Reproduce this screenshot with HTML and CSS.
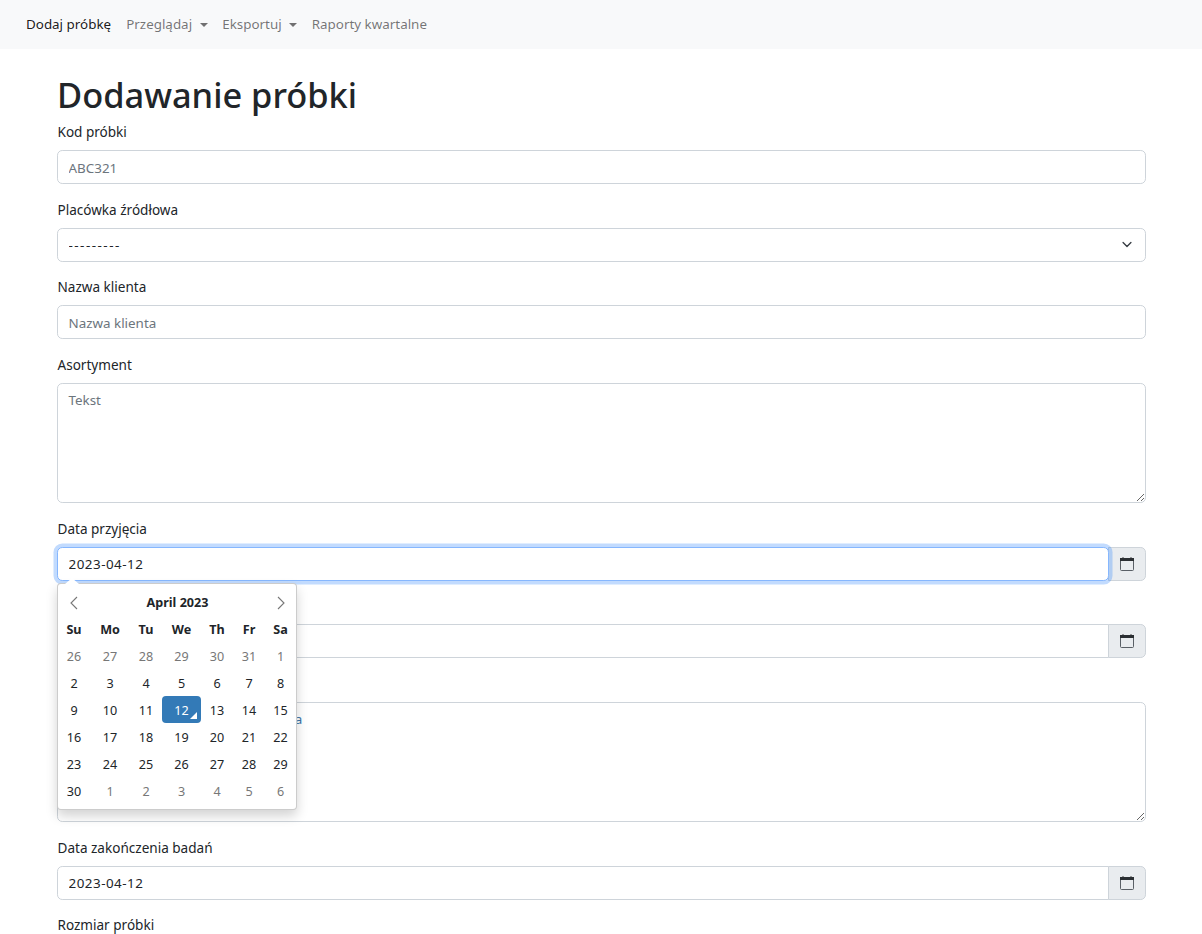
FILE: index.html
```html
<!DOCTYPE html>
<html lang="pl">
<head>
    <meta charset="UTF-8">
    <title>Dodawanie próbki</title>
    <link rel="stylesheet" href="styles.css">
</head>
<body>

    <nav class="navbar">
        <a class="nav-link active" href="#">Dodaj próbkę</a>
        <a class="nav-link dropdown" href="#">Przeglądaj</a>
        <a class="nav-link dropdown" href="#">Eksportuj</a>
        <a class="nav-link" href="#">Raporty kwartalne</a>
    </nav>

    <main class="container">
        <h1>Dodawanie próbki</h1>
        <form>
            <div class="field">
                <label>Kod próbki</label>
                <input class="form-control" type="text" placeholder="ABC321">
            </div>
            <div class="field">
                <label>Placówka źródłowa</label>
                <select class="form-control form-select">
                    <option>---------</option>
                </select>
            </div>
            <div class="field">
                <label>Nazwa klienta</label>
                <input class="form-control" type="text" placeholder="Nazwa klienta">
            </div>
            <div class="field">
                <label>Asortyment</label>
                <textarea class="form-control" placeholder="Tekst"></textarea>
            </div>
            <div class="field">
                <label>Data przyjęcia</label>
                <div class="input-group">
                    <input class="form-control date focused" type="text" value="2023-04-12">
                    <span class="input-addon">
                        <svg width="16" height="16" viewBox="0 0 16 16"><path d="M4 1v2M12 1v2" stroke="#444" fill="none"/><rect x="1.5" y="2.5" width="13" height="12" rx="1" fill="none" stroke="#495057" stroke-width=".9"/><rect x="1" y="2" width="14" height="3" fill="#2b2f33"/></svg>
                    </span>

                    <!-- kalendarz otwarty pod polem -->
                    <div class="picker">
                        <div class="picker-grid">
                            <span class="picker-nav">
                                <svg width="10" height="14" viewBox="0 0 10 14"><path d="M8 1 2 7l6 6" fill="none" stroke="#777" stroke-width="1.1"/></svg>
                            </span>
                            <strong class="picker-title">April 2023</strong>
                            <span class="picker-nav">
                                <svg width="10" height="14" viewBox="0 0 10 14"><path d="m2 1 6 6-6 6" fill="none" stroke="#777" stroke-width="1.1"/></svg>
                            </span>

                            <b>Su</b><b>Mo</b><b>Tu</b><b>We</b><b>Th</b><b>Fr</b><b>Sa</b>

                            <span class="old">26</span><span class="old">27</span><span class="old">28</span><span class="old">29</span><span class="old">30</span><span class="old">31</span><span class="old">1</span>
                            <span>2</span><span>3</span><span>4</span><span>5</span><span>6</span><span>7</span><span>8</span>
                            <span>9</span><span>10</span><span>11</span><span class="today">12</span><span>13</span><span>14</span><span>15</span>
                            <span>16</span><span>17</span><span>18</span><span>19</span><span>20</span><span>21</span><span>22</span>
                            <span>23</span><span>24</span><span>25</span><span>26</span><span>27</span><span>28</span><span>29</span>
                            <span>30</span><span class="old">1</span><span class="old">2</span><span class="old">3</span><span class="old">4</span><span class="old">5</span><span class="old">6</span>
                        </div>
                    </div>
                </div>
            </div>
            <div class="field">
                <label>Data produkcji</label>
                <div class="input-group">
                    <input class="form-control date" type="text" value="2023-04-12">
                    <span class="input-addon">
                        <svg width="16" height="16" viewBox="0 0 16 16"><path d="M4 1v2M12 1v2" stroke="#444" fill="none"/><rect x="1.5" y="2.5" width="13" height="12" rx="1" fill="none" stroke="#495057" stroke-width=".9"/><rect x="1" y="2" width="14" height="3" fill="#2b2f33"/></svg>
                    </span>
                </div>
            </div>
            <div class="field">
                <label>Uwagi</label>
                <textarea class="form-control note">Analiza mikrobiologiczna i chemiczna</textarea>
            </div>
            <div class="field">
                <label>Data zakończenia badań</label>
                <div class="input-group">
                    <input class="form-control date" type="text" value="2023-04-12">
                    <span class="input-addon">
                        <svg width="16" height="16" viewBox="0 0 16 16"><path d="M4 1v2M12 1v2" stroke="#444" fill="none"/><rect x="1.5" y="2.5" width="13" height="12" rx="1" fill="none" stroke="#495057" stroke-width=".9"/><rect x="1" y="2" width="14" height="3" fill="#2b2f33"/></svg>
                    </span>
                </div>
            </div>
            <div class="field">
                <label>Rozmiar próbki</label>
            </div>
        </form>
    </main>

</body>
</html>
```

FILE: styles.css
```css
html, body {
    height: 100%;
    overflow: hidden;
}

body {
    font-family: "Noto Sans", "Open Sans", sans-serif;
    font-size: 13.4px;
    line-height: 21px;
    margin: 0;
    color: #212529;
    background-color: #fff;
}

.navbar {
    display: flex;
    gap: 0.6px;
    background-color: #f8f9fa;
    padding: 7px 19px;
}

.nav-link {
    padding: 7px;
    color: rgba(0, 0, 0, 0.55);
    text-decoration: none;
}

.nav-link.active {
    color: rgba(0, 0, 0, 0.9);
    margin-right: 0.5px;
}

.dropdown::after {
    content: "";
    display: inline-block;
    margin-left: 7.5px;
    vertical-align: 2px;
    border-top: 4.2px solid;
    border-left: 4.2px solid transparent;
    border-right: 4.2px solid transparent;
}

.container {
    padding: 25px 56px 0 57px;
}

h1 {
    font-size: 34.4px;
    font-weight: 500;
    line-height: 42px;
    margin: 0 0 6px 0;
}

.field {
    margin-bottom: 15.5px;
}

label {
    display: block;
    margin-bottom: 7px;
    padding-left: 0.5px;
    font-size: 13.55px;
}

.form-control {
    display: block;
    width: 100%;
    box-sizing: border-box;
    height: 34px;
    padding: 6px 10.5px 4px;
    font: inherit;
    color: #212529;
    background-color: #fff;
    border: 1px solid #ced4da;
    border-radius: 5.25px;
    outline: none;
}

.form-control::placeholder {
    color: #6c757d;
    opacity: 1;
}

.form-control.date {
    padding: 5px 10.5px;
    letter-spacing: 0.5px;
}

textarea.form-control {
    height: 120.5px;
    resize: vertical;
}

.form-control.note {
    color: #3d74a8;
}

.form-select {
    appearance: none;
    letter-spacing: 1.5px;
    background-image: url("data:image/svg+xml,%3csvg xmlns='http://www.w3.org/2000/svg' viewBox='0 0 16 16'%3e%3cpath fill='none' stroke='%23343a40' stroke-linecap='round' stroke-linejoin='round' stroke-width='2' d='m2 5 6 6 6-6'/%3e%3c/svg%3e");
    background-repeat: no-repeat;
    background-position: right 11.5px center;
    background-size: 14px 10.5px;
}

.input-group {
    display: flex;
    position: relative;
}

.input-group .form-control {
    flex: 1;
    min-width: 0;
    border-radius: 5.25px 0 0 5.25px;
}

.input-group .focused {
    position: relative;
    z-index: 3;
    border-color: #86b7fe;
    border-radius: 5.25px;
    box-shadow: 0 0 0 3.5px rgba(13, 110, 253, 0.25);
}

.input-addon {
    display: flex;
    align-items: center;
    justify-content: center;
    width: 38px;
    box-sizing: border-box;
    margin-left: -1px;
    padding-right: 1px;
    background-color: #e9ecef;
    border: 1px solid #ced4da;
    border-radius: 0 5.25px 5.25px 0;
}

.picker {
    position: absolute;
    top: 36.5px;
    left: 0;
    z-index: 10;
    width: 240px;
    box-sizing: border-box;
    padding: 4px 0 4.5px;
    background-color: #fff;
    border: 1px solid #ccc;
    border-color: rgba(0, 0, 0, 0.2);
    border-radius: 4px;
    box-shadow: 0 6px 12px rgba(0, 0, 0, 0.175);
}

/* little arrow pointing at the input */
.picker::before {
    content: "";
    position: absolute;
    top: -6px;
    left: 7px;
    border-left: 7px solid transparent;
    border-right: 7px solid transparent;
    border-bottom: 6px solid #fff;
}

.picker-grid {
    display: grid;
    grid-template-columns: 32px 40px 32px 39px 32px 32px 31px;
    grid-auto-rows: 27px;
    font-size: 12.6px;
}

.picker-grid > * {
    display: flex;
    align-items: center;
    justify-content: center;
    position: relative;
    box-sizing: border-box;
    padding-top: 2px;
}

.picker-grid b, .picker-title {
    font-weight: 700;
}

.picker-title {
    grid-column: span 5;
}

.old {
    color: #777;
}

.today {
    color: #fff;
    background-color: #337ab7;
    border-radius: 4px;
}

.today::before {
    content: "";
    position: absolute;
    right: 4px;
    bottom: 4px;
    border-left: 7px solid transparent;
    border-bottom: 7px solid #fff;
}
```
